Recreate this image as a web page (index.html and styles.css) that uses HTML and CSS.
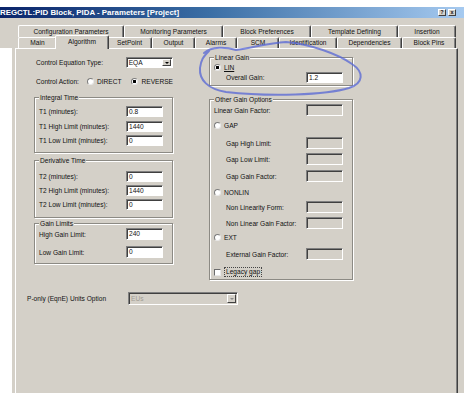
FILE: index.html
```html
<!DOCTYPE html>
<html>
<head>
<meta charset="utf-8">
<title>REGCTL:PID Block, PIDA - Parameters [Project]</title>
<link rel="stylesheet" href="styles.css">
</head>
<body>
<div class="titlebar">
  <span class="title">REGCTL:PID Block, PIDA - Parameters [Project]</span>
  <span class="tbtns"><span class="tbtn">?</span><span class="tbtn">x</span></span>
</div>
<div class="dialog">
  <div class="tabs">
    <div class="tabrow back">
      <div class="tab">Configuration Parameters</div>
      <div class="tab">Monitoring Parameters</div>
      <div class="tab">Block Preferences</div>
      <div class="tab">Template Defining</div>
      <div class="tab">Insertion</div>
    </div>
    <div class="tabrow front">
      <div class="tab">Main</div>
      <div class="tab sel">Algorithm</div>
      <div class="tab">SetPoint</div>
      <div class="tab">Output</div>
      <div class="tab">Alarms</div>
      <div class="tab">SCM</div>
      <div class="tab">Identification</div>
      <div class="tab">Dependencies</div>
      <div class="tab">Block Pins</div>
    </div>
  </div>
  <div class="main">
    <div class="strip"></div>
    <div class="panel">
      <div class="cols">
        <div class="col">
          <div class="frow r-eq">
            <span class="flbl">Control Equation Type:</span>
            <span class="combo eq"><span class="cv">EQA</span><span class="dd"></span></span>
          </div>
          <div class="frow r-act">
            <span class="flbl act">Control Action:</span>
            <span class="opt"><span class="radio"></span>DIRECT</span>
            <span class="opt o2"><span class="radio on"></span>REVERSE</span>
          </div>
          <div class="group g-int">
            <div class="legend">Integral Time</div>
            <div class="grow"><span>T1 (minutes):</span><span class="inp">0.8</span></div>
            <div class="grow"><span>T1 High Limit (minutes):</span><span class="inp">1440</span></div>
            <div class="grow"><span>T1 Low Limit (minutes):</span><span class="inp">0</span></div>
          </div>
          <div class="group g-der">
            <div class="legend">Derivative Time</div>
            <div class="grow"><span>T2 (minutes):</span><span class="inp">0</span></div>
            <div class="grow"><span>T2 High Limit (minutes):</span><span class="inp">1440</span></div>
            <div class="grow"><span>T2 Low Limit (minutes):</span><span class="inp">0</span></div>
          </div>
          <div class="group g-gain">
            <div class="legend">Gain Limits</div>
            <div class="grow tall"><span>High Gain Limit:</span><span class="inp">240</span></div>
            <div class="grow tall"><span>Low Gain Limit:</span><span class="inp">0</span></div>
          </div>
        </div>
        <div class="col">
          <div class="group g-lin">
            <div class="legend">Linear Gain</div>
            <div class="rrow"><span class="radio on"></span><u>LIN</u></div>
            <div class="grow ind"><span>Overall Gain:</span><span class="inp">1.2</span></div>
          </div>
          <div class="group g-oth">
            <div class="legend">Other Gain Options</div>
            <div class="grow tall"><span>Linear Gain Factor:</span><span class="inp dis"></span></div>
            <div class="rrow m4"><span class="radio"></span>GAP</div>
            <div class="grow tall ind m7"><span>Gap High Limit:</span><span class="inp dis"></span></div>
            <div class="grow tall ind m4"><span>Gap Low Limit:</span><span class="inp dis"></span></div>
            <div class="grow tall ind m5"><span>Gap Gain Factor:</span><span class="inp dis"></span></div>
            <div class="rrow m5"><span class="radio"></span>NONLIN</div>
            <div class="grow tall ind m4"><span>Non Linearity Form:</span><span class="inp dis"></span></div>
            <div class="grow tall ind m4"><span>Non Linear Gain Factor:</span><span class="inp dis"></span></div>
            <div class="rrow m3"><span class="radio"></span>EXT</div>
            <div class="grow tall ind m6"><span>External Gain Factor:</span><span class="inp dis"></span></div>
            <div class="rrow m7"><span class="check"></span><span class="focus">Legacy gap</span></div>
          </div>
        </div>
      </div>
      <div class="prow">
        <span class="plbl">P-only (EqnE) Units Option</span>
        <span class="combo disc"><span class="cv">EUs</span><span class="dd"></span></span>
      </div>
    </div>
  </div>
</div>
<svg class="scribble" width="464" height="393" viewBox="0 0 464 393">
  <path d="M204 53 C212 46 226 47 236 50 C252 48 268 43 286 42 C310 44 338 54 352 64 C364 72 364 83 349 88 C326 95 270 97 226 92 C208 89 199 80 200 68 C201 60 203 57 209 51"/>
</svg>
</body>
</html>
```

FILE: styles.css
```css
* { box-sizing: border-box; margin: 0; padding: 0; }
html, body { width: 464px; height: 393px; overflow: hidden; background: #fff; }
body {
  font-family: "Liberation Sans", Arial, sans-serif;
  font-size: 6.6px;
  color: #111;
  position: relative;
}

.titlebar {
  margin-top: 7px;
  height: 11px;
  background: linear-gradient(90deg, #0a246a 0%, #3a6ea5 45%, #a6caf0 100%);
  display: flex;
  align-items: center;
  justify-content: space-between;
  padding-right: 8px;
}
.title {
  color: #fff;
  font-weight: bold;
  font-size: 7.9px;
  line-height: 11px;
  white-space: nowrap;
}
.tbtns { display: flex; gap: 2px; }
.tbtn {
  width: 8px;
  height: 7px;
  background: #d4d0c8;
  border: 1px solid;
  border-color: #fff #404040 #404040 #fff;
  font-size: 5.5px;
  font-weight: bold;
  line-height: 5px;
  text-align: center;
}

.dialog {
  background: #d4d0c8;
  height: 375px;
  display: flex;
  flex-direction: column;
}
.tabs { padding: 7px 0 0 18px; }
.tabrow { display: flex; }
.back { height: 12px; }
.front { height: 11px; }
.tab {
  height: 100%;
  border: 1px solid;
  border-bottom: none;
  border-color: #fff #404040 transparent #fff;
  box-shadow: inset -1px 0 #808080;
  border-radius: 2px 2px 0 0;
  text-align: center;
  white-space: nowrap;
  line-height: 10px;
}
.back .tab { line-height: 11px; }
.back .tab:nth-child(1) { width: 106px; }
.back .tab:nth-child(2) { width: 99px; }
.back .tab:nth-child(3) { width: 88px; }
.back .tab:nth-child(4) { width: 87px; }
.back .tab:nth-child(5) { width: 58px; }
.front .tab:nth-child(1) { width: 39px; }
.front .tab:nth-child(2) { width: 50px; }
.front .tab:nth-child(3) { width: 45px; }
.front .tab:nth-child(4) { width: 43px; }
.front .tab:nth-child(5) { width: 42px; }
.front .tab:nth-child(6) { width: 42px; }
.front .tab:nth-child(7) { width: 58px; }
.front .tab:nth-child(8) { width: 65px; }
.front .tab:nth-child(9) { width: 54px; }
.front .tab.sel {
  position: relative;
  z-index: 2;
  width: 54px;
  height: 14px;
  margin: -2px -2px 0 -2px;
  background: #d4d0c8;
  line-height: 11px;
}

.main { flex: 1; display: flex; }
.strip { width: 12px; background: #fff; }
.panel {
  margin-left: 3px;
  width: 443px;
  border-top: 1px solid #fff;
  border-left: 1px solid #fff;
  border-right: 1px solid #404040;
  box-shadow: inset -1px 0 #808080;
}

.cols {
  display: grid;
  grid-template-columns: 139px 144px;
  column-gap: 36px;
  padding-left: 18px;
  align-items: start;
}
.col { display: flex; flex-direction: column; }

.frow { display: flex; align-items: center; height: 11px; padding-left: 2px; }
.r-eq { margin-top: 8px; }
.r-act { margin-top: 8px; }
.flbl { width: 91px; white-space: nowrap; }
.flbl.act { width: 51px; }
.opt { display: flex; align-items: center; gap: 3px; }
.opt.o2 { margin-left: 10px; }

.radio {
  width: 7px;
  height: 7px;
  flex: none;
  border-radius: 50%;
  background: #fff;
  border: 1px solid;
  border-color: #7c7c7c #e8e8e8 #e8e8e8 #7c7c7c;
}
.radio.on { background: radial-gradient(circle, #000 0 1.4px, #fff 1.8px); }
.check {
  width: 7px;
  height: 7px;
  flex: none;
  background: #fff;
  border: 1px solid;
  border-color: #6c6c6c #e8e8e8 #e8e8e8 #6c6c6c;
}
.focus {
  display: inline-block;
  height: 10px;
  line-height: 8px;
  border: 1px dotted #444;
  padding: 0 1px;
  white-space: nowrap;
}

.combo {
  display: flex;
  height: 11px;
  background: #fff;
  border: 1px solid;
  border-color: #808080 #fff #fff #808080;
  box-shadow: inset 1px 1px #404040;
}
.combo.eq { width: 48px; }
.cv { flex: 1; padding-left: 2px; line-height: 9px; }
.dd {
  width: 9px;
  margin: 1px;
  background: #d4d0c8;
  border: 1px solid;
  border-color: #fff #404040 #404040 #fff;
  display: flex;
  align-items: center;
  justify-content: center;
}
.dd::after {
  content: "";
  border-left: 2px solid transparent;
  border-right: 2px solid transparent;
  border-top: 2px solid #000;
}

.group {
  display: flex;
  flex-direction: column;
  border: 1px solid #8c8a84;
  box-shadow: inset 1px 1px #fff, 1px 1px #fff;
}
.legend {
  align-self: flex-start;
  margin: -5px 0 0 4px;
  padding: 0 1px;
  height: 9px;
  line-height: 9px;
  background: #d4d0c8;
}
.grow {
  display: flex;
  align-items: center;
  justify-content: space-between;
  height: 11px;
  padding: 0 9px 0 4px;
  white-space: nowrap;
}
.grow.tall { height: 12px; }
.grow.ind { padding-left: 16px; }
.rrow {
  display: flex;
  align-items: center;
  gap: 3px;
  height: 10px;
  padding-left: 4px;
}
.inp {
  width: 37px;
  height: 100%;
  background: #fff;
  border: 1px solid;
  border-color: #808080 #fff #fff #808080;
  box-shadow: inset 1px 1px #404040;
  padding-left: 2px;
  line-height: 9px;
}
.inp.dis { background: #d4d0c8; }

.g-int { margin-top: 10px; padding-bottom: 6px; }
.g-int .grow { margin-top: 3.5px; }
.g-int .grow:nth-of-type(2) { margin-top: 4px; }
.g-der { margin-top: 7px; padding-bottom: 7px; }
.g-der .grow { margin-top: 3px; }
.g-der .grow:nth-of-type(2) { margin-top: 6px; }
.g-gain { margin-top: 5px; padding-bottom: 5px; }
.g-gain .grow + .grow { margin-top: 6px; }

.g-lin { margin-top: 8px; padding-bottom: 2px; }
.g-lin .rrow { margin-top: 1px; height: 9px; }
.g-oth { margin-top: 13px; padding-bottom: 2px; }
.m3 { margin-top: 3px; }
.m4 { margin-top: 4px; }
.m5 { margin-top: 5px; }
.m6 { margin-top: 6px; }
.m7 { margin-top: 7px; }

.prow {
  display: flex;
  align-items: center;
  height: 13px;
  margin-top: 12px;
  padding-left: 11px;
}
.plbl { width: 101px; white-space: nowrap; }
.combo.disc {
  width: 110px;
  height: 13px;
  background: #d4d0c8;
  color: #a09c94;
}
.combo.disc .cv { line-height: 11px; }
.combo.disc .dd::after { border-top-color: #8a8a8a; }

.scribble { position: absolute; left: 0; top: 0; pointer-events: none; }
.scribble path {
  fill: none;
  stroke: #5566d6;
  stroke-opacity: 0.75;
  stroke-width: 2;
  stroke-linecap: round;
}
```
